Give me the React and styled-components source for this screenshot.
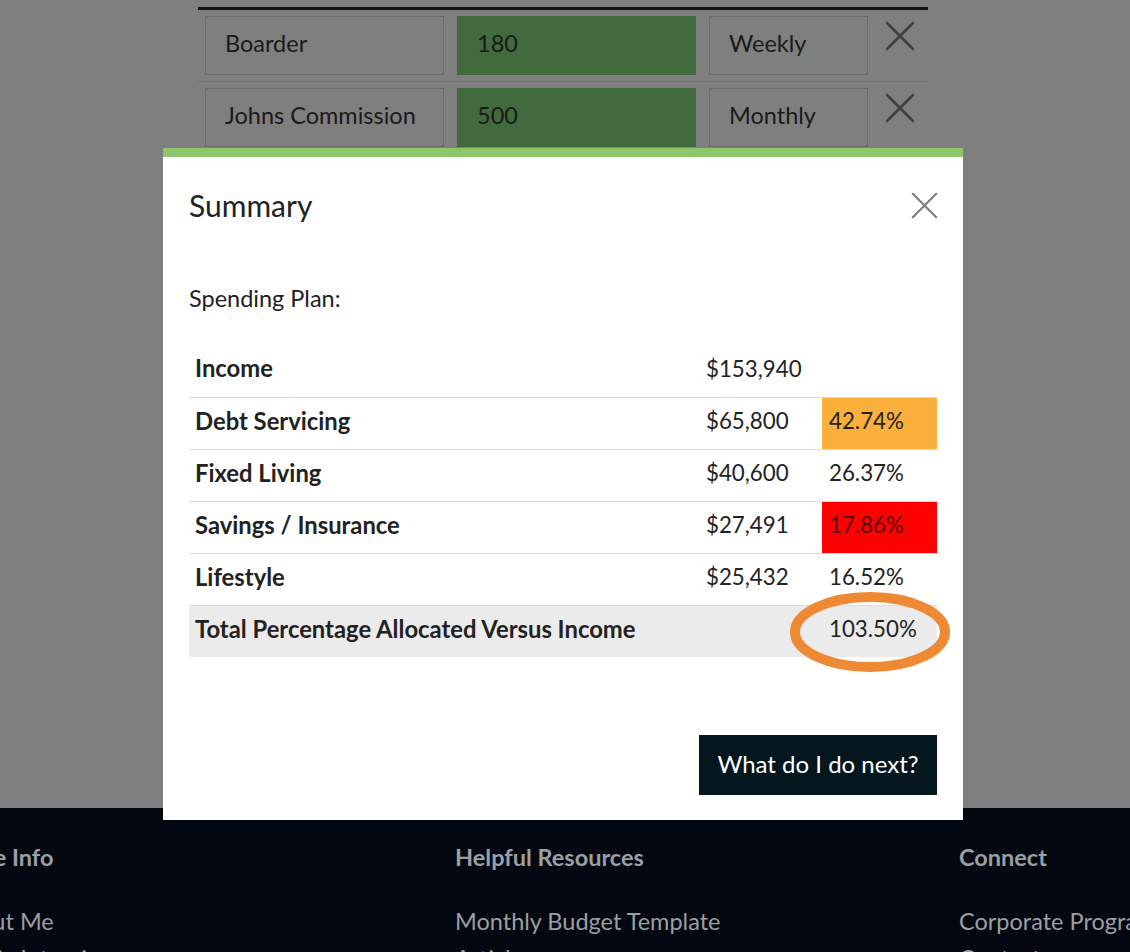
import styled, { createGlobalStyle } from 'styled-components';

const GlobalStyle = createGlobalStyle`
  html, body {
    margin: 0;
    padding: 0;
    background: #7f7f7f;
    font-family: Lato, "Open Sans", "Liberation Sans", sans-serif;
    overflow: hidden;
  }
  * { box-sizing: border-box; }
`;

const incomeRows = [
  { name: 'Boarder', amount: '180', freq: 'Weekly' },
  { name: 'Johns Commission', amount: '500', freq: 'Monthly' },
];

const planRows = [
  { label: 'Income', amount: '$153,940', pct: '' },
  { label: 'Debt Servicing', amount: '$65,800', pct: '42.74%', tone: 'warn' },
  { label: 'Fixed Living', amount: '$40,600', pct: '26.37%' },
  { label: 'Savings / Insurance', amount: '$27,491', pct: '17.86%', tone: 'bad' },
  { label: 'Lifestyle', amount: '$25,432', pct: '16.52%' },
];

const footerCols = [
  { title: 'More Info', links: ['About Me', 'Media Interviews'] },
  { title: 'Helpful Resources', links: ['Monthly Budget Template', 'Articles'] },
  { title: 'Connect', links: ['Corporate Programs', 'Contact'] },
];

const Cross = ({ size = 30, color = '#404040', width = 2.6 }) => (
  <svg width={size} height={size} viewBox="0 0 30 30" fill="none">
    <path d="M2 2 L28 28 M28 2 L2 28" stroke={color} strokeWidth={width} strokeLinecap="round" />
  </svg>
);

export default function App() {
  return (
    <>
      <GlobalStyle />
      <Main>
        <IncomeTable>
          {incomeRows.map((r) => (
            <IncomeRow key={r.name}>
              <Field $w={239}>{r.name}</Field>
              <Field $w={239} $filled>{r.amount}</Field>
              <Field $w={159}>{r.freq}</Field>
              <RemoveBtn><Cross /></RemoveBtn>
            </IncomeRow>
          ))}
        </IncomeTable>
      </Main>

      <Footer>
        {footerCols.map((c) => (
          <FooterCol key={c.title}>
            <FooterTitle>{c.title}</FooterTitle>
            {c.links.map((l) => (
              <FooterLink key={l}>{l}</FooterLink>
            ))}
          </FooterCol>
        ))}
      </Footer>

      <Dialog>
        <DialogHeader>
          <Title>Summary</Title>
          <CloseBtn><Cross size={27} color="#7d7d7d" width={2.4} /></CloseBtn>
        </DialogHeader>
        <DialogBody>
          <Lead>Spending Plan:</Lead>
          <Plan>
            <tbody>
              {planRows.map((r) => (
                <tr key={r.label}>
                  <Label>{r.label}</Label>
                  <Amount>{r.amount}</Amount>
                  <Pct $tone={r.tone}>{r.pct}</Pct>
                </tr>
              ))}
              <TotalRow>
                <Label>Total Percentage Allocated Versus Income</Label>
                <Amount />
                <Pct>
                  103.50%
                  <Ring width="162" height="82" viewBox="0 0 162 82">
                    <ellipse cx="81" cy="41" rx="75" ry="35" fill="none" stroke="#ee8a34" strokeWidth="10" />
                  </Ring>
                </Pct>
              </TotalRow>
            </tbody>
          </Plan>
        </DialogBody>
        <DialogFooter>
          <NextBtn>What do I do next?</NextBtn>
        </DialogFooter>
      </Dialog>
    </>
  );
}

const Main = styled.main`
  height: 808px;
  padding-top: 7px;
`;

const IncomeTable = styled.div`
  width: 730px;
  margin-left: 198px;
  border-top: 3px solid #111;
`;

const IncomeRow = styled.div`
  display: flex;
  align-items: flex-start;
  padding: 6px 0 6px 7px;
  border-bottom: 1px solid #737373;
`;

const Field = styled.div`
  width: ${(p) => p.$w}px;
  height: 59px;
  margin-right: 13px;
  display: flex;
  align-items: center;
  padding: 0 0 5px 19px;
  font-size: 23.5px;
  color: #1a1a1a;
  white-space: nowrap;
  background: ${(p) => (p.$filled ? '#416b3c' : 'transparent')};
  border: 1px solid ${(p) => (p.$filled ? '#416b3c' : '#6c6c6c')};
`;

const RemoveBtn = styled.div`
  margin: 5px 0 0 4px;
  display: flex;
`;

const Footer = styled.footer`
  height: 144px;
  overflow: hidden;
  background: #030810;
  padding-top: 35px;
  display: grid;
  grid-template-columns: 505px 504px 1fr;
  margin-left: -50px;
`;

const FooterCol = styled.div`
  display: flex;
  flex-direction: column;
  white-space: nowrap;
`;

const FooterTitle = styled.div`
  font-size: 23.5px;
  line-height: 28px;
  font-weight: 700;
  color: #9b9fa4;
  margin-bottom: 36px;
`;

const FooterLink = styled.div`
  font-size: 23.5px;
  line-height: 28px;
  color: #9b9fa4;
  margin-bottom: 9px;
`;

const Dialog = styled.div`
  position: fixed;
  left: 163px;
  top: 148px;
  width: 800px;
  background: #fff;
  border-top: 9px solid #8dc66b;
`;

const DialogHeader = styled.div`
  display: flex;
  align-items: center;
  justify-content: space-between;
  padding: 30px 25px 30px 26px;
`;

const Title = styled.h2`
  margin: 0;
  font-size: 30px;
  line-height: 36px;
  font-weight: 400;
  color: #222;
`;

const CloseBtn = styled.div`
  display: flex;
`;

const DialogBody = styled.div`
  padding: 30px 26px 40px;
`;

const Lead = styled.p`
  margin: 0 0 32px;
  font-size: 23.5px;
  line-height: 30px;
  color: #222;
`;

const Plan = styled.table`
  width: 100%;
  border-collapse: collapse;
  font-size: 22.3px;
  color: #222;

  td {
    height: 52px;
    padding-bottom: 5px;
  }

  tr + tr td {
    border-top: 1px solid #dddddd;
  }
`;

const Label = styled.td`
  padding: 0 6px;
  font-weight: 700;
  font-size: 23.8px;
`;

const Amount = styled.td`
  width: 122px;
  padding: 0 6px;
`;

const toneBg = { warn: '#fbb03b', bad: '#ff0000' };

const Pct = styled.td`
  position: relative;
  width: 115px;
  padding: 0 7px;
  background: ${(p) => toneBg[p.$tone] || 'transparent'};
  color: ${(p) => (p.$tone === 'bad' ? '#5a0000' : '#222')};
`;

const TotalRow = styled.tr`
  td {
    background: #ebebeb;
  }
`;

const Ring = styled.svg`
  position: absolute;
  left: -33px;
  top: -15px;
  pointer-events: none;
`;

const DialogFooter = styled.div`
  display: flex;
  justify-content: flex-end;
  padding: 38px 26px 25px;
`;

const NextBtn = styled.button`
  width: 238px;
  height: 60px;
  padding: 0 0 4px;
  border: none;
  background: #04171f;
  color: #fff;
  font-family: inherit;
  font-size: 24px;
`;
